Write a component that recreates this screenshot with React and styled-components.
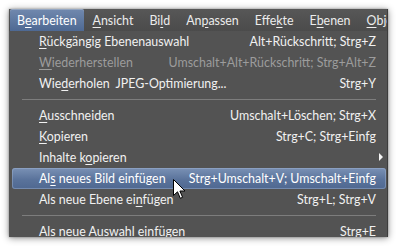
import React from 'react';
import styled, { createGlobalStyle } from 'styled-components';

const Global = createGlobalStyle`
  html, body {
    margin: 0;
    padding: 0;
    background: #ffffff;
  }
  body {
    font-family: Lato, "Noto Sans", "DejaVu Sans", sans-serif;
    font-size: 12.4px;
    -webkit-font-smoothing: antialiased;
  }
`;

const Stage = styled.div`
  width: 398px;
  height: 246px;
  padding: 9px 10px 9px 9px;
  box-sizing: border-box;
`;

const Window = styled.div`
  position: relative;
  width: 379px;
  height: 228px;
  overflow: hidden;
  display: flex;
  flex-direction: column;
  background: #535353;
  box-shadow: 0 1px 7px rgba(0, 0, 0, 0.45), 0 0 2px rgba(0, 0, 0, 0.3);
  border-right: 1px solid #3c3c3c;
  box-sizing: border-box;
`;

const MenuBar = styled.div`
  display: flex;
  align-items: stretch;
  height: 22px;
  flex: none;
  padding-left: 1px;
  gap: 2px;
  background: linear-gradient(#575757, #4b4b4b);
`;

const MenuItem = styled.div`
  display: flex;
  align-items: center;
  padding: 0 7px;
  color: #ececec;
  white-space: nowrap;
  border-radius: 2px 2px 0 0;
  ${p => p.$open && `
    background: linear-gradient(#7189ae, #4e6993);
    box-shadow: inset 0 1px 0 rgba(255,255,255,0.25);
    color: #ffffff;
  `}
`;

const Key = styled.span`
  text-decoration: underline;
  text-underline-offset: 2px;
`;

const Dropdown = styled.div`
  display: flex;
  flex-direction: column;
  flex: none;
`;

const Row = styled.div`
  position: relative;
  display: flex;
  align-items: center;
  justify-content: space-between;
  height: 21px;
  flex: none;
  margin: 0 1px 0 3px;
  padding: 0 10px 1px 27px;
  box-sizing: border-box;
  color: ${p => (p.$disabled ? '#9c9c9c' : '#f1f1f1')};
  white-space: pre;
  border-radius: 3px;
  ${p => p.$active && `
    background: linear-gradient(#7a91b5, #5a739b 55%, #4f6891);
    box-shadow: inset 0 0 0 1px rgba(160,180,210,0.45);
    color: #ffffff;
  `}
`;

const Shortcut = styled.span`
  color: inherit;
`;

const SubArrow = styled.span`
  width: 0;
  height: 0;
  border-left: 4px solid #f4f4f4;
  border-top: 4px solid transparent;
  border-bottom: 4px solid transparent;
  margin-right: -7px;
`;

const Separator = styled.div`
  height: 11px;
  flex: none;
  display: flex;
  align-items: center;
  padding: 0 11px 0 13px;
  &::after {
    content: '';
    flex: 1;
    height: 1px;
    background: #7d7d7d;
  }
`;

const Cursor = styled.svg`
  position: absolute;
  left: 161px;
  top: 11px;
  pointer-events: none;
`;

const menus = [
  ['', 'B', 'e', 'arbeiten', true],
  ['', '', 'A', 'nsicht'],
  ['Bi', '', 'l', 'd'],
  ['An', '', 'p', 'assen'],
  ['Effe', '', 'k', 'te'],
  ['E', '', 'b', 'enen'],
  ['', '', 'O', 'bje'],
];

const items = [
  { pre: '', key: 'R', post: 'ückgängig Ebenenauswahl', sc: 'Alt+Rückschritt; Strg+Z' },
  { pre: '', key: 'W', post: 'iederherstellen', sc: 'Umschalt+Alt+Rückschritt; Strg+Alt+Z', disabled: true },
  { pre: 'Wie', key: 'd', post: 'erholen  JPEG-Optimierung...', sc: 'Strg+Y' },
  { sep: true },
  { pre: '', key: 'A', post: 'usschneiden', sc: 'Umschalt+Löschen; Strg+X' },
  { pre: '', key: 'K', post: 'opieren', sc: 'Strg+C; Strg+Einfg' },
  { pre: 'Inhalte k', key: 'o', post: 'pieren', sub: true },
  { pre: 'Al', key: 's', post: ' neues Bild einfügen', sc: 'Strg+Umschalt+V; Umschalt+Einfg', active: true },
  { pre: 'Als neue Ebene ei', key: 'n', post: 'fügen', sc: 'Strg+L; Strg+V' },
  { sep: true },
  { pre: 'Als neue Auswahl einfügen', key: '', post: '', sc: 'Strg+E' },
];

function Pointer() {
  return (
    <Cursor width="14" height="21" viewBox="0 0 14 21">
      <path
        d="M0.5 0.5 L0.5 16.5 L4.5 12.8 L7.3 19.3 L9.6 18.3 L6.9 12 L12 12 Z"
        fill="#ffffff"
        stroke="#000000"
        strokeWidth="1"
        strokeLinejoin="miter"
      />
    </Cursor>
  );
}

export default function App() {
  return (
    <>
      <Global />
      <Stage>
        <Window>
          <MenuBar>
            {menus.map(([a, b, k, rest, open], i) => (
              <MenuItem key={i} $open={open}>
                {a}{b}<Key>{k}</Key>{rest}
              </MenuItem>
            ))}
          </MenuBar>
          <Dropdown>
            {items.map((it, i) =>
              it.sep ? (
                <Separator key={i} />
              ) : (
                <Row key={i} $disabled={it.disabled} $active={it.active}>
                  <span>
                    {it.pre}
                    {it.key && <Key>{it.key}</Key>}
                    {it.post}
                  </span>
                  {it.sub ? <SubArrow /> : <Shortcut>{it.sc}</Shortcut>}
                  {it.active && <Pointer />}
                </Row>
              )
            )}
          </Dropdown>
        </Window>
      </Stage>
    </>
  );
}
